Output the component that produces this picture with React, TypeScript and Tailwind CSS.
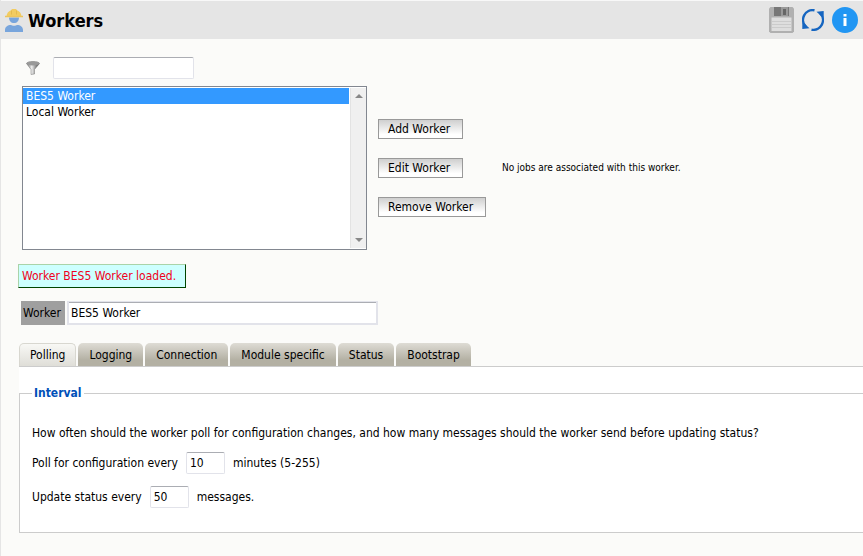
import { useState } from "react";

const workers = ["BES5 Worker", "Local Worker"];
const tabs = ["Polling", "Logging", "Connection", "Module specific", "Status", "Bootstrap"];

const inputStyle =
  "block rounded-[2px] border border-[#e2e3ea] border-t-[#abadb3] bg-white px-[3px] text-black outline-none";
const buttonStyle =
  "h-5 border border-[#999] bg-linear-to-b from-[#cfcfcf] to-white to-80% pr-3 pl-[9px] leading-[17px] whitespace-nowrap";

function WorkerIcon() {
  return (
    <svg width="18" height="23" viewBox="0 0 18 23" aria-hidden="true">
      <path d="M0 23v-2c0-3 2.500-5 6-5 1 1 5 1 6 0 3.500 0 6 2 6 5v2z" fill="#78a5dc" />
      <path d="M4 8.500h10c0 3.500-2 5.500-5 5.500s-5-2-5-5.500z" fill="#78a5dc" />
      <path d="M1.500 7.500C1.500 4.500 3.500 2 6 1.200L7 0h4l1 1.200c2.500.8 4.500 3.300 4.500 6.300z" fill="#f2cc61" />
      <path d="M6.500 1.500v4M11.500 1.500v4" stroke="#e3ba50" />
      <path d="M0 7.500h18" stroke="#ecc55c" strokeWidth="1.500" />
    </svg>
  );
}

function FunnelIcon() {
  return (
    <svg width="14" height="14" viewBox="0 0 14 14" aria-hidden="true">
      <defs>
        <linearGradient id="funnel" x1="0" x2="1" y1="0" y2="0">
          <stop offset="0" stopColor="#666" />
          <stop offset=".4" stopColor="#eee" />
          <stop offset="1" stopColor="#333" />
        </linearGradient>
      </defs>
      <path d="M.5 2.500 5 8.500v5l3.500-.5V8.500l5-6z" fill="url(#funnel)" stroke="#777" strokeWidth=".5" />
      <ellipse cx="7" cy="2.300" rx="6.300" ry="1.700" fill="#999" stroke="#999" />
    </svg>
  );
}

function SaveIcon() {
  return (
    <svg width="25" height="26" viewBox="0 0 25 26" aria-hidden="true">
      <path d="M1.500 0h22L25 1.500V24.500L23.500 26h-22L0 24.500v-23z" fill="#b0b0b0" />
      <path d="M5 0h15v9H5z" fill="#777" />
      <path d="M12 0h7v9h-7z" fill="#999" />
      <path d="M14 2h3v6h-3z" fill="#666" />
      <path d="M2.500 10.500h20V24h-20z" fill="#dedede" />
      <path d="M3 14.500h19M3 17.500h19M3 20.500h19" stroke="#cbcbcb" />
    </svg>
  );
}

function RefreshIcon() {
  return (
    <svg width="22" height="22" viewBox="0 0 22 22" aria-hidden="true">
      <g fill="none" stroke="#1565c0" strokeWidth="2.400">
        <path d="M12.500 1.300A9.700 9.700 0 0 0 4 17.800" />
        <path d="M9.500 20.700A9.700 9.700 0 0 0 18 4.200" />
      </g>
      <path d="M14.500 2.800 21.700 2v7.200zM7.500 19.200.3 20v-7.200z" fill="#1565c0" />
    </svg>
  );
}

function InfoIcon() {
  return (
    <svg width="26" height="26" viewBox="0 0 26 26" aria-hidden="true">
      <circle cx="13" cy="13" r="13" fill="#2196f3" />
      <path d="M11.500 7h3v2.500h-3zM11.500 11h3v8h-3z" fill="#fff" />
    </svg>
  );
}

export default function App() {
  const [tab, setTab] = useState("Polling");
  return (
    <div className="min-h-screen overflow-hidden border-l border-[#e5e5e5] bg-[#fbfbf9] font-['DejaVu_Sans_Condensed','DejaVu_Sans',sans-serif] text-[12px] leading-4 text-black">
      <header className="flex h-[39px] items-center border-t border-[#f8f8f8] bg-[#e5e5e5] pr-[5px] pl-1">
        <WorkerIcon />
        <h1 className="ml-[5px] flex-1 pt-[2px] text-[18px] leading-6 font-bold">Workers</h1>
        <div className="flex items-center gap-2">
          <button aria-label="Save"><SaveIcon /></button>
          <button aria-label="Refresh"><RefreshIcon /></button>
          <button aria-label="Information"><InfoIcon /></button>
        </div>
      </header>

      <main className="pt-[18px] pl-[18px]">
        <div className="ml-[7px] flex items-center gap-[13px]">
          <FunnelIcon />
          <input aria-label="Filter workers" className={`${inputStyle} h-[22px] w-[141px]`} />
        </div>

        <div className="mt-[7px] ml-[3px] flex items-center gap-[11px]">
          <div className="flex h-[164px] w-[345px] shrink-0 border border-[#828790] bg-white py-px">
            <select
              size={10}
              aria-label="Workers"
              defaultValue="BES5 Worker"
              className="h-full flex-1 appearance-none overflow-hidden bg-white p-0 outline-none"
            >
              {workers.map((w) => (
                <option
                  key={w}
                  className="h-4 min-h-4 px-[3px] pt-px pb-0 leading-4 text-black checked:bg-[#3399ff] checked:bg-linear-to-r checked:from-[#3399ff] checked:to-[#3399ff] checked:text-white"
                >
                  {w}
                </option>
              ))}
            </select>
            <div className="ml-px flex w-4 flex-col items-center justify-between border-l border-[#e3e3e3] bg-[#f0f0f0] py-[6px]">
              <svg width="8" height="4" viewBox="0 0 8 4" aria-hidden="true"><path d="M0 4 4 0l4 4z" fill="#888" /></svg>
              <svg width="8" height="4" viewBox="0 0 8 4" aria-hidden="true"><path d="m0 0 4 4 4-4z" fill="#888" /></svg>
            </div>
          </div>
          <div className="flex w-[113px] shrink-0 flex-col items-start gap-[19px]">
            <button className={buttonStyle}>Add Worker</button>
            <button className={buttonStyle}>Edit Worker</button>
            <button className={buttonStyle}>Remove Worker</button>
          </div>
          <p className="text-[10px] whitespace-nowrap">No jobs are associated with this worker.</p>
        </div>

        <div className="mt-[14px] -ml-px flex">
          <p role="status" className="min-w-[168px] border border-t-[#a9d3a9] border-r-[#004400] border-b-[#004400] border-l-[#a9d3a9] bg-[#ccffff] px-[3px] py-[3px] text-[#f00020]">
            Worker BES5 Worker loaded.
          </p>
        </div>

        <div className="mt-[13px] ml-[2px] flex gap-[2px]">
          <label htmlFor="worker-name" className="w-11 bg-[#9f9f9f] px-[2px] py-1">Worker</label>
          <input id="worker-name" defaultValue="BES5 Worker" className="block h-6 w-[311px] border-2 border-[#e2e3ea] bg-white px-[2px] shadow-[inset_0_1px_#abadb3] outline-none [border-top-width:1px]" />
        </div>

        <div role="tablist" className="mt-[18px] flex gap-[2px]">
          {tabs.map((t) => (
            <button
              key={t}
              role="tab"
              aria-selected={t === tab}
              onClick={() => setTab(t)}
              className={`h-[23px] rounded-t-[5px] whitespace-nowrap ${
                t === tab
                  ? "border border-b-0 border-[#d8d7d0] bg-linear-to-b from-[#f8f8f5] to-[#dfded8] px-[10px]"
                  : "bg-linear-to-b from-[#dedcd5] to-[#b3b0a3] to-75% px-[11px]"
              }`}
            >
              {t}
            </button>
          ))}
        </div>

        <section role="tabpanel" aria-label={tab} className="border-t border-[#ccc] bg-white pt-[18px]">
          <fieldset className="border border-r-0 border-[#ccc] px-3 pb-6">
            <legend className="px-[2px] leading-4 font-bold text-[#0050b8]">Interval</legend>
            <p className="mt-6 whitespace-nowrap">
              How often should the worker poll for configuration changes, and how many messages should the worker send before updating status?
            </p>
            <div className="mt-[11px] flex items-center gap-2">
              <label htmlFor="poll">Poll for configuration every</label>
              <input id="poll" defaultValue="10" className={`${inputStyle} h-[22px] w-[39px]`} />
              <span>minutes (5-255)</span>
            </div>
            <div className="mt-3 flex items-center gap-2">
              <label htmlFor="status-count">Update status every</label>
              <input id="status-count" defaultValue="50" className={`${inputStyle} h-[22px] w-[39px]`} />
              <span>messages.</span>
            </div>
          </fieldset>
        </section>
        <div className="-ml-[18px] h-[23px]" />
      </main>
    </div>
  );
}
